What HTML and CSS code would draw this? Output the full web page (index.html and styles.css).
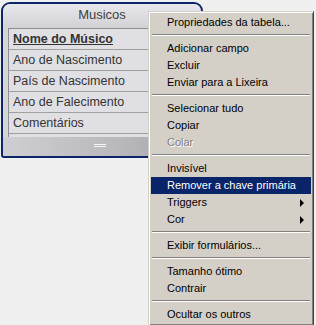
FILE: index.html
```html
<!DOCTYPE html>
<html>
<head>
<meta charset="utf-8">
<link rel="stylesheet" href="styles.css">
</head>
<body>
<div class="win">
  <div class="title">Musicos</div>
  <div class="fields">
    <div class="row pk">Nome do Músico</div>
    <div class="row">Ano de Nascimento</div>
    <div class="row">País de Nascimento</div>
    <div class="row">Ano de Falecimento</div>
    <div class="row">Comentários</div>
  </div>
  <div class="foot"><span class="grip"></span></div>
</div>

<div class="menu">
  <div class="item">Propriedades da tabela...</div>
  <div class="sep"></div>
  <div class="item">Adicionar campo</div>
  <div class="item">Excluir</div>
  <div class="item">Enviar para a Lixeira</div>
  <div class="sep"></div>
  <div class="item">Selecionar tudo</div>
  <div class="item">Copiar</div>
  <div class="item disabled">Colar</div>
  <div class="sep"></div>
  <div class="item">Invisível</div>
  <div class="item active">Remover a chave primária</div>
  <div class="item sub">Triggers</div>
  <div class="item sub">Cor</div>
  <div class="sep"></div>
  <div class="item">Exibir formulários...</div>
  <div class="sep"></div>
  <div class="item">Tamanho ótimo</div>
  <div class="item">Contrair</div>
  <div class="sep"></div>
  <div class="item">Ocultar os outros</div>
</div>
</body>
</html>
```
FILE: styles.css
```css
html, body {
  margin: 0;
  padding: 0;
  background: #f0f0f0;
  font-family: "Liberation Sans", Arial, sans-serif;
}
body {
  padding: 2px 0 0 1px;
  height: 323px;
  overflow: hidden;
  position: relative;
}
.win {
  width: 198px;
  border: 2px solid #0c2468;
  border-radius: 9px 9px 3px 3px;
  background: linear-gradient(to right, #d6d6da, #c4c4c8 70%, #b0b0b4);
  overflow: hidden;
}
.title {
  height: 24px;
  line-height: 22px;
  text-align: center;
  font-size: 13px;
  color: #404040;
  background: linear-gradient(to bottom, #e8e8ec, #d2d2d6);
}
.fields {
  margin-left: 5px;
  border-left: 1px solid #909090;
  border-top: 1px solid #909090;
  background: #e0e0e4;
  padding-bottom: 3px;
}
.row {
  height: 20px;
  line-height: 20px;
  border-bottom: 1px solid #a0a0a0;
  padding-left: 4px;
  font-size: 12.5px;
  color: #333;
}
.row.pk {
  font-weight: bold;
  text-decoration: underline;
}
.foot {
  height: 19px;
  background: linear-gradient(to right, #cfcfd3, #b8b8bc 60%, #a4a4a8);
  position: relative;
}
.grip {
  position: absolute;
  left: 91px;
  top: 7px;
  width: 12px;
  height: 1px;
  border-top: 1px solid #f4f4f4;
  border-bottom: 1px solid #f4f4f4;
}
.menu {
  position: absolute;
  left: 148px;
  top: 11px;
  width: 160px;
  padding: 2px;
  background: #d4d0c8;
  border: 1px solid;
  border-color: #d4d0c8 #404040 #404040 #d4d0c8;
  box-shadow: inset 1px 1px 0 #ffffff, inset -1px -1px 0 #808080;
  font-size: 11px;
  color: #000;
}
.item {
  height: 17px;
  line-height: 17px;
  padding-left: 16px;
  position: relative;
  white-space: nowrap;
}
.item.active {
  background: #0a246a;
  color: #fff;
}
.item.disabled {
  color: #808080;
  text-shadow: 1px 1px 0 #ffffff;
}
.item.sub::after {
  content: "";
  position: absolute;
  right: 7px;
  top: 5px;
  border-left: 4px solid #000;
  border-top: 4px solid transparent;
  border-bottom: 4px solid transparent;
}
.sep {
  height: 9px;
  position: relative;
}
.sep::before {
  content: "";
  position: absolute;
  left: 1px;
  right: 1px;
  top: 3px;
  border-top: 1px solid #808080;
  border-bottom: 1px solid #ffffff;
}
```
